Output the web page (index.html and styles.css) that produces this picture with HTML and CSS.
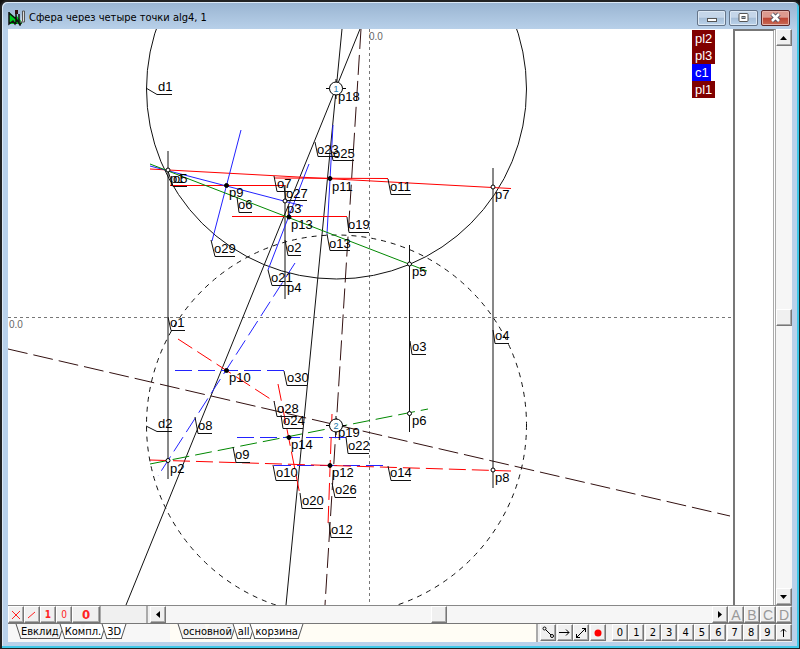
FILE: index.html
```html
<!DOCTYPE html>
<html lang="ru">
<head>
    <meta charset="UTF-8">
    <meta name="viewport" content="width=device-width, initial-scale=1.0">
    <title>Сфера через четыре точки alg4, 1</title>
    <link rel="stylesheet" href="styles.css">
</head>
<body>
<div class="window">
    <header class="titlebar">
        <svg class="app-icon" width="18" height="17" viewBox="0 0 18 17">
            <path d="M1 3l7 6V6l6 7v2H1z" fill="#0c2"/>
            <path d="M1 3v12l4-3 2 3 2-4 3 5 2-5M1 4l7 6M8 1v14M11 5v9" fill="none" stroke="#111" stroke-width="1.5"/>
            <path d="M7 1h3v4H7z" fill="#311"/>
            <path d="M14.500 2v10l-2 2M14.500 2h2v11h-3" fill="#ddd" stroke="#555"/>
        </svg>
        <h1>Сфера через четыре точки alg4, 1</h1>
        <div class="win-buttons">
            <button class="win-btn" aria-label="Свернуть"><svg width="12" height="11"><rect x="1.500" y="6.500" width="9" height="3" fill="#fff" stroke="#555"/></svg></button>
            <button class="win-btn" aria-label="Развернуть"><svg width="11" height="11"><rect x="1" y="1.500" width="9" height="8" rx="1" fill="#fff" stroke="#555"/><rect x="4" y="4.500" width="3" height="2" fill="#9ab" stroke="#555"/></svg></button>
            <button class="win-btn close" aria-label="Закрыть"><svg width="13" height="11"><path d="M3 2l7 7M10 2L3 9" stroke="#545060" stroke-width="4.500"/><path d="M3 2l7 7M10 2L3 9" stroke="#fff" stroke-width="2.500"/></svg></button>
        </div>
    </header>

    <main class="work">
        <div class="canvas">
            <svg class="drawing">
                <g transform="translate(-8 -29)">
                    <!-- axes -->
                    <path class="axis" d="M8 317.500H731M369.500 29V605"/>
                    <text class="zero" x="9" y="328">0.0</text>
                    <text class="zero" x="369" y="40">0.0</text>

                    <!-- sphere outlines -->
                    <circle class="ln" cx="336.500" cy="89" r="190"/>
                    <circle class="ln dot" cx="336.500" cy="425" r="190"/>

                    <!-- long lines -->
                    <path class="ln" d="M360 29L126 605M342 29L286 605"/>
                    <path class="ln brown" d="M361 29L325 605M8 349L730 516"/>
                    <path class="ln vert" d="M168 151V479M493 168V488M285 185V299"/>
                    <path class="ln" d="M409.500 245V432"/>

                    <!-- upper projection -->
                    <path class="ln red" d="M150 169L511 188.500M274 178L388 178.500M170 185.500H285M232 216.500H347"/>
                    <path class="ln blue" d="M150 166L303 206M241 130L212 241M309 164L268 270M333 125L327 234"/>
                    <path class="ln green" d="M150 164L427 271"/>

                    <!-- lower projection -->
                    <path class="ln blue dash" d="M295 263L158 476"/>
                    <path class="ln blue dash" d="M175 370.500H284"/>
                    <path class="ln blue dash" d="M237 437.500H346"/>
                    <path class="ln blue dash" d="M274 465.500H388"/>
                    <path class="ln green dash" d="M150 464L428 409"/>
                    <path class="ln red dash" d="M178 339L275 402"/>
                    <path class="ln red dash" d="M278 384L300 495"/>
                    <path class="ln red dash" d="M150 460L511 471"/>
                    <path class="ln red dash" d="M332 414L328 525"/>

                    <!-- callout lines -->
                    <g class="ln">
                        <path d="M146 88L157 94.500H172M146 426L157 431.500H172"/>
                        <path d="M315 142L318 156.500H338M331 150L333 160.500H354"/>
                        <path d="M274 176L277 191.500H291M284 186L286 200.500H307"/>
                        <path d="M388 179L391 194.500H411M347 217L349 232.500H369"/>
                        <path d="M327 234L330 250.500H350M285 240L288 255.500H301"/>
                        <path d="M268 270L272 285.500H290M211 240L215 256.500H235"/>
                        <path d="M237 197L239 212.500H252M168 171L173 186.500H187"/>
                        <path d="M168 317L171 330.500H185M410 341L412 354.500H426"/>
                        <path d="M493 330L495 343.500H509M284 371L287 385.500H307"/>
                        <path d="M274 401L277 416.500H297M281 415L283 428.500H303"/>
                        <path d="M346 437L348 453.500H369M195 417L198 433.500H212"/>
                        <path d="M233 447L236 462.500H250M273 465L276 480.500H297"/>
                        <path d="M388 466L391 480.500H411M332 483L335 497.500H356"/>
                        <path d="M300 493L302 508.500H323M329 522L331 537.500H352"/>
                    </g>

                    <!-- points -->
                    <g class="pt">
                        <circle cx="168" cy="170" r="2"/>
                        <circle cx="285" cy="201" r="2"/>
                        <circle cx="409.500" cy="264" r="2"/>
                        <circle cx="493" cy="187" r="2"/>
                        <circle cx="168" cy="460.500" r="2"/>
                        <circle cx="409.500" cy="413.500" r="2"/>
                        <circle cx="493" cy="470" r="2"/>
                    </g>
                    <g class="pt solid">
                        <circle cx="226.500" cy="185.500" r="2"/>
                        <circle cx="330" cy="178.500" r="2"/>
                        <circle cx="289" cy="217" r="2"/>
                        <circle cx="226.500" cy="370.500" r="2"/>
                        <circle cx="289" cy="437.500" r="2"/>
                        <circle cx="330" cy="465.500" r="2"/>
                    </g>
                    <g class="pt">
                        <path d="M326 88.500H346M336 79V99M326 425.500H346M336 416V435"/>
                        <circle cx="336" cy="88.500" r="6.500"/>
                        <circle cx="336" cy="425.500" r="6.500"/>
                    </g>
                    <text class="num" x="336" y="92">1</text>
                    <text class="num" x="336" y="429">2</text>

                    <!-- names -->
                    <g class="name">
                        <text x="158" y="91">d1</text>
                        <text x="158" y="428">d2</text>
                        <text x="317" y="154">o23</text>
                        <text x="333" y="158">o25</text>
                        <text x="277" y="188">o7</text>
                        <text x="286" y="198">o27</text>
                        <text x="390" y="191">o11</text>
                        <text x="348" y="229">o19</text>
                        <text x="329" y="248">o13</text>
                        <text x="287" y="252">o2</text>
                        <text x="271" y="282">o21</text>
                        <text x="214" y="253">o29</text>
                        <text x="238" y="209">o6</text>
                        <text x="173" y="183">o5</text>
                        <text x="170" y="327">o1</text>
                        <text x="412" y="351">o3</text>
                        <text x="495" y="340">o4</text>
                        <text x="287" y="382">o30</text>
                        <text x="277" y="413">o28</text>
                        <text x="283" y="425">o24</text>
                        <text x="348" y="450">o22</text>
                        <text x="198" y="430">o8</text>
                        <text x="235" y="459">o9</text>
                        <text x="276" y="477">o10</text>
                        <text x="390" y="477">o14</text>
                        <text x="335" y="494">o26</text>
                        <text x="302" y="505">o20</text>
                        <text x="331" y="534">o12</text>
                        <text x="170" y="183">p1</text>
                        <text x="170" y="473">p2</text>
                        <text x="287" y="213">p3</text>
                        <text x="287" y="292">p4</text>
                        <text x="412" y="276">p5</text>
                        <text x="412" y="425">p6</text>
                        <text x="495" y="199">p7</text>
                        <text x="495" y="482">p8</text>
                        <text x="229" y="197">p9</text>
                        <text x="229" y="382">p10</text>
                        <text x="332" y="191">p11</text>
                        <text x="332" y="477">p12</text>
                        <text x="291" y="229">p13</text>
                        <text x="291" y="449">p14</text>
                        <text x="338" y="101">p18</text>
                        <text x="338" y="437">p19</text>
                    </g>
                </g>
            </svg>
            <ul class="planes">
                <li>pl2</li>
                <li>pl3</li>
                <li class="current">c1</li>
                <li>pl1</li>
            </ul>
        </div>
        <div class="side-panel"></div>
        <div class="scroll vertical">
            <button class="key" aria-label="Вверх"><svg width="8" height="4"><path d="M0 4h7L3.500 0z"/></svg></button>
            <button class="key thumb" aria-label="Прокрутка"></button>
            <button class="key" aria-label="Вниз"><svg width="8" height="4"><path d="M0 0h7L3.500 4z"/></svg></button>
        </div>
    </main>

    <div class="toolrow">
        <button class="key red" aria-label="Удалить"><svg width="10" height="10"><path d="M1 1l8 8M9 1L1 9" stroke="#f22"/></svg></button>
        <button class="key red" aria-label="Линия"><svg width="10" height="10"><path d="M1 8L8 2" stroke="#f22"/></svg></button>
        <button class="key red bold">1</button>
        <button class="key red">0</button>
        <button class="key red wide">0</button>
        <div class="blank"></div>
        <div class="scroll horizontal">
            <button class="key" aria-label="Влево"><svg width="4" height="8"><path d="M4 0v7L0 3.500z"/></svg></button>
            <button class="key thumb" aria-label="Прокрутка"></button>
            <button class="key" aria-label="Вправо"><svg width="4" height="8"><path d="M0 0v7L4 3.500z"/></svg></button>
        </div>
        <button class="key letter">A</button>
        <button class="key letter">B</button>
        <button class="key letter">C</button>
        <button class="key letter">D</button>
    </div>

    <footer class="bottom">
        <nav class="tabs modes">
            <button class="tab active">Евклид</button>
            <button class="tab">Компл.</button>
            <button class="tab">3D</button>
        </nav>
        <nav class="tabs layers">
            <button class="tab active">основной</button>
            <button class="tab">all</button>
            <button class="tab">корзина</button>
        </nav>
        <div class="keys tools">
            <button class="key" aria-label="Отрезок"><svg width="13" height="13"><path d="M3 3l7 7" stroke="#000"/><g fill="#fff" stroke="#000"><circle cx="2.500" cy="2.500" r="1.500"/><circle cx="10" cy="10" r="1.500"/></g></svg></button>
            <button class="key" aria-label="Вектор"><svg width="11" height="9"><path d="M0 4.500h10M7 1.500l3 3-3 3" fill="none" stroke="#000"/></svg></button>
            <button class="key" aria-label="Прямая"><svg width="12" height="12"><path d="M1 11L11 1M7 1.500h3.500V5M1.500 7v3.500H5" fill="none" stroke="#000"/></svg></button>
            <button class="key" aria-label="Точка"><svg width="8" height="8"><circle cx="4" cy="4" r="3.500" fill="#f00"/></svg></button>
        </div>
        <div class="keys digits">
            <button class="key">0</button>
            <button class="key">1</button>
            <button class="key">2</button>
            <button class="key">3</button>
            <button class="key">4</button>
            <button class="key">5</button>
            <button class="key">6</button>
            <button class="key">7</button>
            <button class="key">8</button>
            <button class="key">9</button>
            <button class="key" aria-label="Выше"><svg width="7" height="9"><path d="M3.500 9V1M1 3.500L3.500 1L6 3.500" fill="none" stroke="#000"/></svg></button>
        </div>
    </footer>
</div>
</body>
</html>
```

FILE: styles.css
```css
* {
    box-sizing: border-box;
}
body {
    margin: 0;
    background: #111;
    font-family: "DejaVu Sans Condensed", "DejaVu Sans", sans-serif;
    font-size: 11px;
    color: #000;
}
button {
    padding: 0;
    border: none;
    font: inherit;
    color: inherit;
}
.window {
    display: flex;
    flex-direction: column;
    height: 100vh;
    padding: 0 7px 6px 6px;
    background: #b9d1ea;
    border: solid #222;
    border-width: 2px 1px 1px 2px;
    border-radius: 7px 7px 0 0;
    box-shadow: inset -2px -2px 0 #3fc8e8, inset 1px 1px 0 #dce9f6;
    background-image: linear-gradient(#99b4d1, #b9d1ea 28px);
}

/* title bar */
.titlebar {
    display: flex;
    align-items: center;
    gap: 3px;
    flex: none;
    height: 27px;
    padding: 4px 2px 0 0;
}
.titlebar h1 {
    flex: 1;
    margin: 0;
    font-size: 11px;
    font-weight: normal;
}
.win-buttons {
    display: flex;
    gap: 3px;
}
.win-btn {
    display: flex;
    align-items: center;
    justify-content: center;
    width: 29px;
    height: 16px;
    background: linear-gradient(#c5d6e9 45%, #a5bdd7 50%, #bcd3ea);
    border: 1px solid #65758a;
    border-radius: 2px;
    box-shadow: inset 0 0 0 1px #dce8f4;
}
.win-btn.close {
    background: linear-gradient(#dc9a8f 45%, #bc4433 50%, #c96a55);
    border-color: #5c2a2c;
    box-shadow: inset 0 0 0 1px #e5b1a8;
}

/* drawing area */
.work {
    display: flex;
    flex: 1;
    min-height: 0;
    background: #fff;
}
.canvas {
    position: relative;
    flex: 1;
    min-width: 0;
    overflow: hidden;
}
.drawing {
    display: block;
    width: 100%;
    height: 100%;
}
.drawing text {
    font-family: "Liberation Sans", Arial, sans-serif;
    font-size: 13px;
}
.drawing .zero {
    font-size: 10px;
    fill: #666;
}
.drawing .num {
    font-size: 9px;
    fill: #27a;
    text-anchor: middle;
}
.axis {
    stroke: #777;
    stroke-dasharray: 3 3;
}
.ln {
    fill: none;
    stroke: #111;
}
.vert { stroke: #111; }
.red { stroke: #f00; }
.blue { stroke: #22f; }
.green { stroke: #080; }
.brown {
    stroke: #311;
    stroke-dasharray: 20 6;
}
.dash { stroke-dasharray: 17 6; }
.dot { stroke-dasharray: 5 5; }
.pt {
    fill: #fff;
    stroke: #000;
}
.pt.solid { fill: #000; }
.planes {
    position: absolute;
    top: 1px;
    right: 18px;
    width: 23px;
    margin: 0;
    padding: 0;
    list-style: none;
    font: 13px/17px "Liberation Sans", Arial, sans-serif;
    color: #fff;
}
.planes li {
    padding-left: 3px;
    background: #800000;
}
.planes .current {
    width: 19px;
    background: #00f;
}
.side-panel {
    width: 43px;
    background: #fff;
    border: solid #777;
    border-width: 2px 0 0 2px;
    border-right: 3px double #aaa;
}

/* raised buttons and scroll bars */
.key {
    display: flex;
    align-items: center;
    justify-content: center;
    flex: none;
    width: 16px;
    height: 17px;
    background: #f0f0f0;
    border: 1px solid;
    border-color: #fff #777 #777 #fff;
    box-shadow: inset -1px -1px 0 #aaa;
}
.scroll {
    display: flex;
    justify-content: space-between;
    background: #f6f6f6;
}
.scroll.vertical {
    flex-direction: column;
    width: 16px;
}
.scroll.horizontal {
    flex: 1;
    margin-left: 2px;
}

/* row under the drawing */
.toolrow {
    display: flex;
    flex: none;
    height: 18px;
    background: #f0f0f0;
    border-top: 1px solid #888;
}
.toolrow .red {
    color: #f22;
    font-size: 10px;
}
.toolrow .bold {
    font-weight: bold;
}
.toolrow .wide {
    width: 28px;
    font-size: 13px;
    font-weight: bold;
}
.toolrow .letter {
    color: #999;
    font: 14px "Liberation Sans", Arial, sans-serif;
}
.blank {
    width: 48px;
    border: solid #aaa;
    border-width: 0 2px 0 1px;
}

/* tabs */
.bottom {
    display: flex;
    flex: none;
    height: 19px;
    background: #f7f7f7;
    border-top: 1px solid #777;
}
.tabs {
    display: flex;
    align-items: flex-start;
    padding-left: 10px;
}
.modes {
    flex: 0 0 162px;
}
.layers {
    flex: 1;
    background: #fffdf5;
    border-right: 2px solid #aaa;
}
.tab {
    position: relative;
    isolation: isolate;
    height: 15px;
    padding: 0 3px;
    background: none;
    line-height: 15px;
}
.tab::before,
.tab::after {
    content: "";
    position: absolute;
    z-index: -1;
    top: 0;
    bottom: 0;
    background: #fff;
    border-bottom: 1px solid #555;
}
.tab::before {
    left: 0;
    right: 50%;
    border-left: 1px solid #555;
    transform: skewX(18deg);
}
.tab::after {
    left: 50%;
    right: 0;
    border-right: 1px solid #555;
    transform: skewX(-18deg);
}
.tab.active::before,
.tab.active::after {
    background: #f5f5f5;
}

/* keys in the bottom right corner */
.keys {
    display: flex;
    justify-content: space-between;
    background: #f0f0f0;
}
.tools {
    width: 70px;
    padding: 0 2px;
}
.digits {
    width: 184px;
    padding-left: 4px;
}
```
